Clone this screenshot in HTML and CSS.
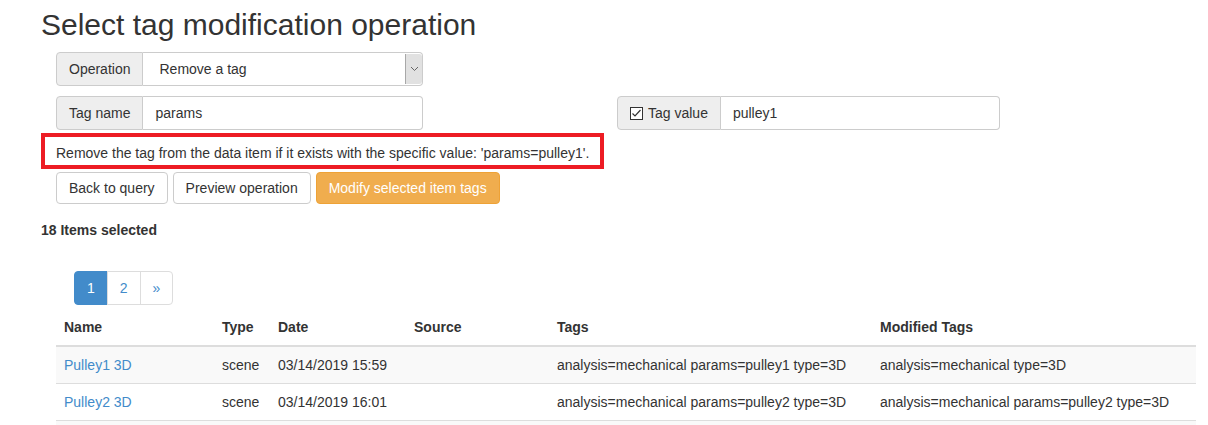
FILE: index.html
```html
<!DOCTYPE html>
<html lang="en">
<head>
	<meta charset="UTF-8">
	<title>Tag modification</title>
	<link rel="stylesheet" href="styles.css">
</head>
<body>
	<div class="page">
		<h1>Select tag modification operation</h1>

		<div class="form-row">
			<div class="input-group">
				<span class="addon">Operation</span>
				<div class="field select">
					<span class="select-text">Remove a tag</span>
					<span class="select-arrow">
						<svg width="9" height="6" viewBox="0 0 9 6"><path d="M1 1 L4.5 4.5 L8 1" fill="none" stroke="#666" stroke-width="1"/></svg>
					</span>
				</div>
			</div>
		</div>

		<div class="form-row split">
			<div class="input-group">
				<span class="addon">Tag name</span>
				<div class="field">params</div>
			</div>
			<div class="input-group wide">
				<span class="addon">
					<svg class="check" width="13" height="13" viewBox="0 0 13 13"><rect x="0.5" y="0.5" width="12" height="12" fill="#fff" stroke="#333"/><path d="M2.5 6.5 L5 9 L10.5 3" fill="none" stroke="#333" stroke-width="1.2"/></svg>
					Tag value
				</span>
				<div class="field">pulley1</div>
			</div>
		</div>

		<div class="notice">Remove the tag from the data item if it exists with the specific value: 'params=pulley1'.</div>

		<div class="buttons">
			<span class="btn">Back to query</span>
			<span class="btn">Preview operation</span>
			<span class="btn btn-warning">Modify selected item tags</span>
		</div>

		<div class="count">18 Items selected</div>

		<ul class="pagination">
			<li class="active">1</li>
			<li>2</li>
			<li>&raquo;</li>
		</ul>

		<table class="items">
			<thead>
				<tr>
					<th class="c-name">Name</th>
					<th class="c-type">Type</th>
					<th class="c-date">Date</th>
					<th class="c-source">Source</th>
					<th class="c-tags">Tags</th>
					<th>Modified Tags</th>
				</tr>
			</thead>
			<tbody>
				<tr>
					<td><a href="#">Pulley1 3D</a></td>
					<td>scene</td>
					<td>03/14/2019 15:59</td>
					<td></td>
					<td>analysis=mechanical params=pulley1 type=3D</td>
					<td>analysis=mechanical type=3D</td>
				</tr>
				<tr>
					<td><a href="#">Pulley2 3D</a></td>
					<td>scene</td>
					<td>03/14/2019 16:01</td>
					<td></td>
					<td>analysis=mechanical params=pulley2 type=3D</td>
					<td>analysis=mechanical params=pulley2 type=3D</td>
				</tr>
			</tbody>
		</table>
		<div class="table-more"></div>
	</div>
</body>
</html>
```

FILE: styles.css
```css
body{
	margin:0;
	font-family:"Liberation Sans", Arial, sans-serif;
	font-size:14px;
	line-height:20px;
	color:#333;
	background:#fff;
}
ul,li{
	margin:0;
	padding:0;
	list-style:none;
}
.page{
	padding-left:41px;
}
h1{
	margin:8px 0 0;
	font-size:30px;
	line-height:33px;
	font-weight:normal;
}
.form-row{
	display:flex;
	margin:11px 0 0 15px;
}
.form-row.split{
	margin-top:10px;
	gap:194px;
}
.input-group{
	display:flex;
	width:367px;
	height:34px;
	box-sizing:border-box;
}
.input-group.wide{
	width:383px;
}
.addon{
	display:flex;
	align-items:center;
	padding:0 12px;
	background:#eee;
	border:1px solid #ccc;
	border-radius:4px 0 0 4px;
	white-space:nowrap;
}
.check{
	margin-right:5px;
}
.field{
	flex:1;
	display:flex;
	align-items:center;
	padding:0 12px;
	border:1px solid #ccc;
	border-left:0;
	border-radius:0 4px 4px 0;
}
.field.select{
	padding:0;
}
.select-text{
	flex:1;
	padding-left:16px;
}
.select-arrow{
	display:flex;
	align-items:center;
	justify-content:center;
	width:16px;
	align-self:stretch;
	margin:1px 0;
	background:#e1e1e1;
	border-left:1px solid #a8a8a8;
	border-radius:0 3px 3px 0;
}
.notice{
	width:563px;
	height:36px;
	box-sizing:border-box;
	margin-top:3px;
	padding:6px 11px;
	border:4px solid #ed1c24;
	line-height:20px;
	white-space:nowrap;
}
.buttons{
	display:flex;
	gap:5px;
	margin:3px 0 0 15px;
}
.btn{
	display:inline-block;
	padding:5px 12px;
	line-height:20px;
	border:1px solid #ccc;
	border-radius:4px;
	background:#fff;
	color:#333;
	cursor:pointer;
}
.btn-warning{
	background:#f0ad4e;
	border-color:#eea236;
	color:#fff;
}
.count{
	margin-top:16px;
	font-weight:bold;
}
.pagination{
	display:flex;
	margin:31px 0 4px 33px;
}
.pagination li{
	padding:6px 12px;
	line-height:20px;
	border:1px solid #ddd;
	margin-left:-1px;
	color:#428bca;
	cursor:pointer;
}
.pagination li:first-child{
	margin-left:0;
	border-radius:4px 0 0 4px;
}
.pagination li:last-child{
	border-radius:0 4px 4px 0;
}
.pagination li.active{
	background:#428bca;
	border-color:#428bca;
	color:#fff;
}
.items{
	margin-left:15px;
	width:1140px;
	border-collapse:collapse;
	text-align:left;
}
.items th,
.items td{
	padding:8px;
	line-height:20px;
	vertical-align:top;
	white-space:nowrap;
}
.items th{
	border-bottom:2px solid #ddd;
}
.items td{
	border-top:1px solid #ddd;
}
.items tbody tr:nth-child(odd){
	background:#f9f9f9;
}
.items tbody tr:last-child td{
	border-bottom:1px solid #ddd;
}
.items a{
	color:#428bca;
	text-decoration:none;
}
.table-more{
	margin-left:15px;
	width:1140px;
	height:20px;
	background:#f9f9f9;
}
.c-name{ width:142px; }
.c-type{ width:40px; }
.c-date{ width:120px; }
.c-source{ width:127px; }
.c-tags{ width:307px; }
```
